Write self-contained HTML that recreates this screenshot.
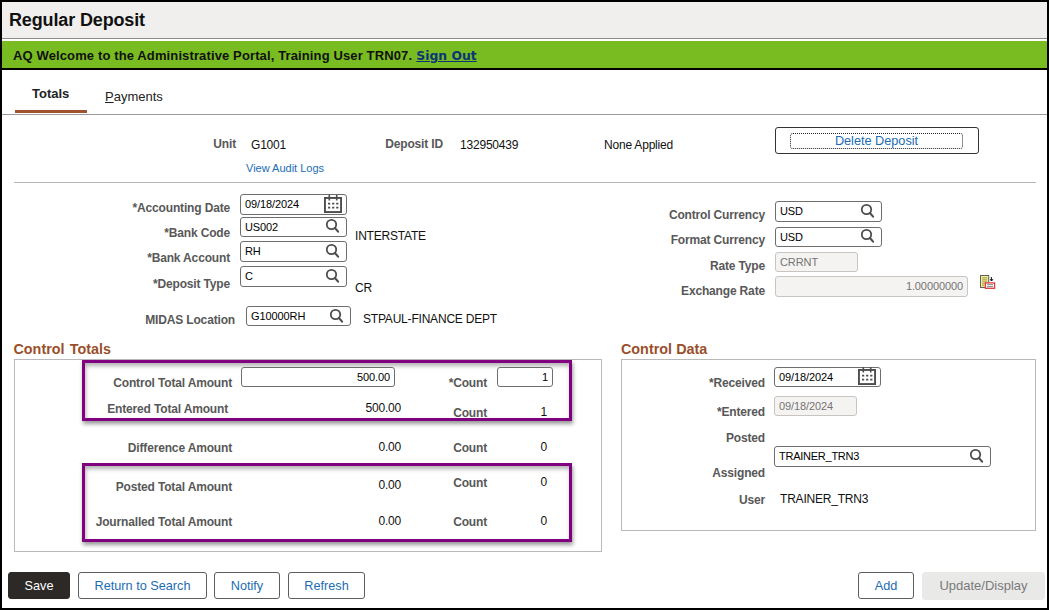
<!DOCTYPE html>
<html><head><meta charset="utf-8">
<style>
*{box-sizing:border-box;margin:0;padding:0}
html,body{width:1049px;height:610px;overflow:hidden;background:#fff}
body{font-family:"Liberation Sans",Arial,sans-serif;font-size:12px;color:#000;position:relative}
.abs{position:absolute}
#frame{position:absolute;left:0;top:0;width:1049px;height:610px;border:2px solid #000;z-index:50;pointer-events:none}
#hdr{position:absolute;left:0;top:0;width:1049px;height:39px;background:#f0efee;border-bottom:1px solid #8c8c8c}
#title{position:absolute;left:9px;top:9px;font-size:18px;font-weight:bold;color:#111;line-height:22px;white-space:nowrap;letter-spacing:-0.14px}
#green{position:absolute;left:0;top:41px;width:1049px;height:28px;background:#78bc22}
#gline{position:absolute;left:0;top:68px;width:1049px;height:2px;background:#000}
#gtext{position:absolute;left:13px;top:48px;font-size:13px;font-weight:bold;color:#111;line-height:16px;white-space:nowrap;letter-spacing:0.125px}
#gtext a{color:#0a3578;text-decoration:underline;font-family:'DejaVu Sans',sans-serif;font-size:12.4px;letter-spacing:0;margin-left:0.4px}
.lbl{position:absolute;font-weight:bold;letter-spacing:-0.16px;color:#585858;font-size:12px;line-height:14px;white-space:nowrap;text-align:right}
.val{position:absolute;letter-spacing:-0.2px;font-size:12px;line-height:14px;white-space:nowrap;color:#111}
.inp{position:absolute;border:1px solid #6e6e6e;border-radius:3px;background:#fff;font-size:11px;line-height:13px;color:#000;white-space:nowrap}
.inp span{position:absolute;left:4px;top:3px;letter-spacing:-0.1px}
.inp.dis{background:#f4f3f2;border-color:#c8c4c0;color:#747474}
.hl{position:absolute;border:3px solid #800080;box-shadow:1px 3px 4px rgba(0,0,0,.4),inset 1px 3px 4px rgba(0,0,0,.3)}
.btn{position:absolute;border:1px solid #5d5d5d;border-radius:3px;background:#fff;color:#1a6cb3;font-size:12.7px;line-height:16px;text-align:center;white-space:nowrap}
.sec{position:absolute;font-size:14.35px;word-spacing:1.4px;font-weight:bold;color:#9a4f2b;line-height:16px;white-space:nowrap}
.box{position:absolute;border:1px solid #b9b9b9;background:#fff}
svg{position:absolute;overflow:visible}
.ic{position:absolute;margin:-1px 0 0 -1px}
</style></head><body>
<svg width="0" height="0" style="position:absolute"><defs>
<symbol id="cal" viewBox="0 0 20 20"><rect x="1.95" y="3.95" width="16.1" height="14.1" fill="none" stroke="#4d4d4d" stroke-width="1.9"/><path d="M6.3 1v5.4M13.7 1v5.4" stroke="#4d4d4d" stroke-width="1.6" fill="none"/><path d="M5 8.8h2.2v1.8h-2.2zM9.1 8.8h2.2v1.8h-2.2zM13.2 8.8h2.2v1.8h-2.2zM5 12.7h2.2v1.8h-2.2zM9.1 12.7h2.2v1.8h-2.2zM13.2 12.7h2.2v1.8h-2.2z" fill="#4d4d4d"/></symbol>
<symbol id="mag" viewBox="0 0 18 18"><circle cx="7.5" cy="7.5" r="4.7" fill="none" stroke="#4d4d4d" stroke-width="1.8"/><path d="M10.9 11L14.1 14.6" stroke="#4d4d4d" stroke-width="2.1" stroke-linecap="round"/></symbol>
</defs></svg>
<div id="hdr"></div>
<div id="title">Regular Deposit</div>
<div id="green"></div><div id="gline"></div>
<div id="gtext">AQ Welcome to the Administrative Portal, Training User TRN07. <a>Sign Out</a></div>

<!-- tabs -->
<div class="abs" style="left:32px;top:86px;font-size:13px;font-weight:bold;color:#222;line-height:15px">Totals</div>
<div class="abs" style="left:15px;top:110px;width:72px;height:3px;background:#a0522d"></div>
<div class="abs" style="left:105px;top:89px;font-size:13px;color:#222;line-height:15px"><u>P</u>ayments</div>
<div class="abs" style="left:2px;top:114px;width:1045px;height:1px;background:#9a9a9a"></div>

<!-- row 1 -->
<div class="lbl" style="left:136px;width:100px;top:137px">Unit</div>
<div class="val" style="left:251px;top:138px">G1001</div>
<div class="abs" style="left:246px;top:162px;font-size:11px;line-height:13px;color:#1a6cb3">View Audit Logs</div>
<div class="lbl" style="left:343px;width:100px;top:137px">Deposit ID</div>
<div class="val" style="left:460px;top:138px">132950439</div>
<div class="val" style="left:604px;top:138px">None Applied</div>
<div class="btn" style="left:775px;top:127px;width:204px;height:27px;border-color:#333"><div class="abs" style="left:14px;top:5px;width:173px;height:16px;border:1px dotted #222;border-radius:3px;line-height:14px;font-size:12.7px">Delete Deposit</div></div>
<div class="abs" style="left:14px;top:182px;width:1022px;height:1px;background:#b5b5b5"></div>

<!-- left form -->
<div class="lbl" style="left:80px;width:150px;top:201px">*Accounting Date</div>
<div class="inp" style="left:240px;top:194px;width:107px;height:21px"><span>09/18/2024</span><svg class="ic" style="left:83px;top:0" width="20" height="20"><use href="#cal"/></svg></div>
<div class="lbl" style="left:80px;width:150px;top:226px">*Bank Code</div>
<div class="inp" style="left:240px;top:217px;width:107px;height:20px"><span>US002</span><svg class="ic" style="left:84px;top:0" width="18" height="18"><use href="#mag"/></svg></div>
<div class="val" style="left:355px;top:229px">INTERSTATE</div>
<div class="lbl" style="left:80px;width:150px;top:251px">*Bank Account</div>
<div class="inp" style="left:240px;top:241px;width:107px;height:21px"><span>RH</span><svg class="ic" style="left:84px;top:1px" width="18" height="18"><use href="#mag"/></svg></div>
<div class="lbl" style="left:80px;width:150px;top:277px">*Deposit Type</div>
<div class="inp" style="left:240px;top:266px;width:107px;height:21px"><span>C</span><svg class="ic" style="left:84px;top:1px" width="18" height="18"><use href="#mag"/></svg></div>
<div class="val" style="left:355px;top:281px">CR</div>
<div class="lbl" style="left:85px;width:150px;top:313px">MIDAS Location</div>
<div class="inp" style="left:246px;top:306px;width:105px;height:20px"><span>G10000RH</span><svg class="ic" style="left:82px;top:1px" width="18" height="18"><use href="#mag"/></svg></div>
<div class="val" style="left:363px;top:312px">STPAUL-FINANCE DEPT</div>

<!-- right form -->
<div class="lbl" style="left:615px;width:150px;top:208px">Control Currency</div>
<div class="inp" style="left:775px;top:201px;width:107px;height:21px"><span>USD</span><svg class="ic" style="left:84px;top:0.6px" width="18" height="18"><use href="#mag"/></svg></div>
<div class="lbl" style="left:615px;width:150px;top:233px">Format Currency</div>
<div class="inp" style="left:775px;top:227px;width:107px;height:20px"><span>USD</span><svg class="ic" style="left:84px;top:0.4px" width="18" height="18"><use href="#mag"/></svg></div>
<div class="lbl" style="left:615px;width:150px;top:259px">Rate Type</div>
<div class="inp dis" style="left:775px;top:252px;width:83px;height:20px"><span>CRRNT</span></div>
<div class="lbl" style="left:615px;width:150px;top:284px">Exchange Rate</div>
<div class="inp dis" style="left:775px;top:276px;width:193px;height:21px"><span style="left:auto;right:4px">1.00000000</span></div>

<svg style="left:978px;top:273px" width="20" height="18" viewBox="0 0 20 18"><rect x="2.5" y="2.5" width="8.2" height="12" fill="#f3ef8d" stroke="#606060"/><path d="M4.2 4.9h5M4.2 6.9h5M4.2 8.9h5M4.2 10.9h2.5M4.2 12.6h1.5" stroke="#8e8b50" stroke-width="0.9"/><rect x="7.4" y="9.9" width="9.2" height="5.4" fill="#fff" stroke="#e23b42" stroke-width="1.3"/><path d="M9 11.7h6M9 13.6h6" stroke="#777" stroke-width="0.9"/><path d="M13.5 4.2v3M12.3 6.6l1.2 1.4 1.2-1.4z" stroke="#111" stroke-width="0.9" fill="#111"/><path d="M12.6 4.6h0.9" stroke="#111" stroke-width="0.8"/></svg>
<!-- Control Totals -->
<div class="sec" style="left:13.5px;top:340.5px">Control Totals</div>
<div class="box" style="left:14px;top:359px;width:588px;height:193px"></div>
<div class="hl" style="left:82px;top:360px;width:490px;height:61px"></div>
<div class="hl" style="left:82px;top:463px;width:490px;height:79px"></div>

<div class="lbl" style="left:82px;width:150px;top:376px">Control Total Amount</div>
<div class="inp" style="left:241px;top:367px;width:154px;height:20px"><span style="left:auto;right:4px;top:3px">500.00</span></div>
<div class="lbl" style="left:387px;width:100px;top:376px">*Count</div>
<div class="inp" style="left:497px;top:367px;width:56px;height:20px"><span style="left:auto;right:4px;top:3px">1</span></div>

<div class="lbl" style="left:78px;width:150px;top:402px">Entered Total Amount</div>
<div class="val" style="left:301px;width:100px;text-align:right;top:401px">500.00</div>
<div class="lbl" style="left:387px;width:100px;top:406px">Count</div>
<div class="val" style="left:497px;width:50px;text-align:right;top:405px">1</div>

<div class="lbl" style="left:82px;width:150px;top:441px">Difference Amount</div>
<div class="val" style="left:301px;width:100px;text-align:right;top:440px">0.00</div>
<div class="lbl" style="left:387px;width:100px;top:441px">Count</div>
<div class="val" style="left:497px;width:50px;text-align:right;top:440px">0</div>

<div class="lbl" style="left:82px;width:150px;top:480px">Posted Total Amount</div>
<div class="val" style="left:301px;width:100px;text-align:right;top:478px">0.00</div>
<div class="lbl" style="left:387px;width:100px;top:476px">Count</div>
<div class="val" style="left:497px;width:50px;text-align:right;top:475px">0</div>

<div class="lbl" style="left:82px;width:150px;top:515px">Journalled Total Amount</div>
<div class="val" style="left:301px;width:100px;text-align:right;top:514px">0.00</div>
<div class="lbl" style="left:387px;width:100px;top:515px">Count</div>
<div class="val" style="left:497px;width:50px;text-align:right;top:514px">0</div>

<!-- Control Data -->
<div class="sec" style="left:621px;top:340.5px;word-spacing:0.2px">Control Data</div>
<div class="box" style="left:621px;top:359px;width:415px;height:172px"></div>
<div class="lbl" style="left:615px;width:150px;top:376px">*Received</div>
<div class="inp" style="left:774px;top:367px;width:107px;height:20px"><span>09/18/2024</span><svg class="ic" style="left:83px;top:-1px" width="20" height="20"><use href="#cal"/></svg></div>
<div class="lbl" style="left:615px;width:150px;top:405px">*Entered</div>
<div class="inp dis" style="left:774px;top:396px;width:83px;height:20px"><span>09/18/2024</span></div>
<div class="lbl" style="left:615px;width:150px;top:431px">Posted</div>
<div class="inp" style="left:774px;top:446px;width:217px;height:21px"><span style="letter-spacing:-0.25px">TRAINER_TRN3</span><svg class="ic" style="left:194px;top:1px" width="18" height="18"><use href="#mag"/></svg></div>
<div class="lbl" style="left:615px;width:150px;top:466px">Assigned</div>
<div class="lbl" style="left:615px;width:150px;top:493px">User</div>
<div class="val" style="left:780px;top:492px">TRAINER_TRN3</div>

<!-- bottom buttons -->
<div class="btn" style="left:8px;top:572px;width:62px;height:27px;background:#2d2926;border-color:#2d2926;color:#fff;padding-top:5px">Save</div>
<div class="btn" style="left:78px;top:572px;width:129px;height:27px;padding-top:5px">Return to Search</div>
<div class="btn" style="left:214px;top:572px;width:66px;height:27px;padding-top:5px">Notify</div>
<div class="btn" style="left:288px;top:572px;width:77px;height:27px;padding-top:5px">Refresh</div>
<div class="btn" style="left:858px;top:572px;width:56px;height:27px;padding-top:5px">Add</div>
<div class="btn" style="left:922px;top:572px;width:123px;height:28px;padding-top:5px;background:#e9e9e8;border-color:#e9e9e8;color:#7a7a7a;font-size:13px">Update/Display</div>

<div id="frame"></div>
</body></html>
